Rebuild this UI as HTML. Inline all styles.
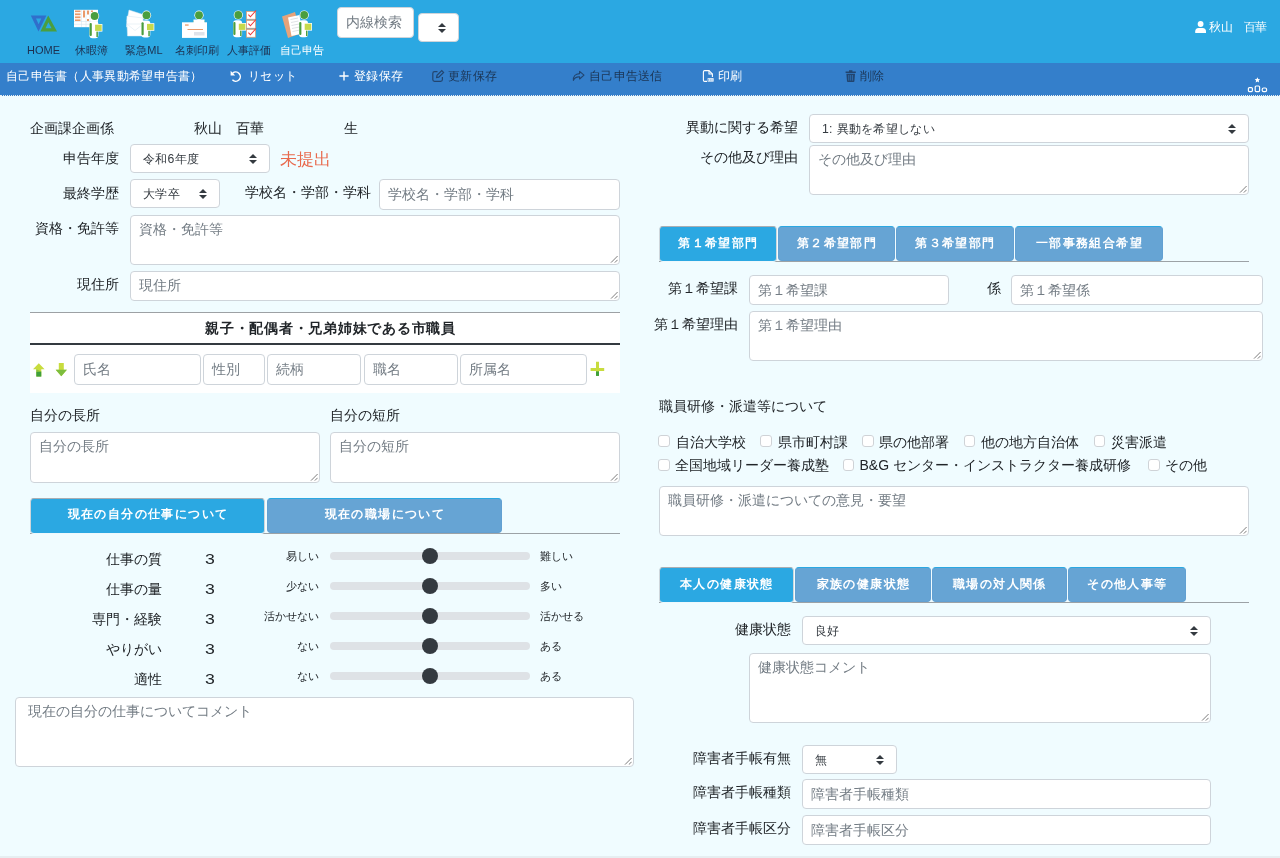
<!DOCTYPE html>
<html lang="ja">
<head>
<meta charset="utf-8">
<title>自己申告書</title>
<style>
*{box-sizing:border-box;margin:0;padding:0}
html,body{width:1280px;height:858px;overflow:hidden}
body{position:relative;background:#f0fcff;font-family:"Liberation Sans",sans-serif;font-size:14px;color:#212529}
.a{position:absolute}
.t{position:absolute;white-space:nowrap;line-height:1;font-size:14px}
.r{text-align:right}
.w{color:#fff}
.dk{color:#1b3555}
#top{left:0;top:0;width:1280px;height:63px;background:#2ba8e2}
#bar{left:0;top:63px;width:1280px;height:33px;background:#347fcb;border-bottom:1px dotted #e9eef0}
.nl{font-size:11px;color:#1d3050;text-align:center;width:60px}
.nl.w{color:#fff}
.b12{font-size:12.25px;letter-spacing:.3px}
.fc{position:absolute;background:#fff;border:1px solid #ced4da;border-radius:4px;color:#737c84;font-size:14px;line-height:1;white-space:nowrap;overflow:hidden}
.fc span{position:absolute;left:8px;top:7px}
.ta span{top:6px}
.sel{position:absolute;background:#fff;border:1px solid #ced4da;border-radius:4px;color:#343a40;font-size:12.25px;letter-spacing:.3px;line-height:1;white-space:nowrap;overflow:hidden}
.sel span{position:absolute;left:12px;top:8px}
.sel svg{position:absolute;right:12px;top:50%;margin-top:-5px}
.ta svg{position:absolute;right:1px;bottom:1px}
.tab{position:absolute;height:35px;border:1px solid #62a0d2;border-top-color:#2ba8e2;border-radius:4px;background:#66a4d4;color:#fff;font-weight:bold;font-size:12px;letter-spacing:1.4px;text-align:center;line-height:31px;white-space:nowrap;padding-left:1px}
.tab.on{height:36px;background:#2ba8e2;border-color:#a9aeb3 #cfd6db #eef8fc #cfd6db}
.rt{line-height:33px}
.ln{position:absolute;height:1px;background:#9ca2a6}
.cb{position:absolute;width:11.5px;height:11.5px;border:1px solid #cfd3d7;border-radius:3px;background:#fff}
.trk{position:absolute;left:329.5px;width:200px;height:8px;border-radius:4px;background:#dee2e6}
.thm{position:absolute;left:421.75px;width:16px;height:16px;border-radius:8px;background:#343a40}
.s10{font-size:10.5px}
.n3{left:205px;font-size:14.5px;transform:scaleX(1.22);transform-origin:0 0}
</style>
</head>
<body>
<div id="wrap" style="position:absolute;left:0;top:0;width:1280px;height:858px;will-change:transform">
<div id="top" class="a"></div>
<div id="bar" class="a"></div>

<!-- NAV -->
<div id="nav">
<svg class="a" style="left:0;top:0" width="1280" height="96" viewBox="0 0 1280 96">
<defs>
<g id="person">
<rect x="-5.2" y="5.2" width="9" height="17" rx="3" fill="#fff"/>
<rect x="-5" y="7" width="2.2" height="13" rx="1" fill="#4a9e3f"/>
<rect x="1.8" y="15" width="1.5" height="6" fill="#4a9e3f"/>
<circle cx="0" cy="0" r="4.6" fill="#fff"/>
<circle cx="0" cy="0" r="3.9" fill="#4a9e3f"/>
<rect x="-0.2" y="8" width="8" height="7.6" fill="#fff"/>
<rect x="0.5" y="8.7" width="6.6" height="6.2" fill="#c6d94b"/>
</g>
</defs>
<!-- HOME logo -->
<path d="M30.8 15.4H46.4L38.5 31.4Z M36 18.6H41.3L38.6 24.2Z" fill="#306fcb" fill-rule="evenodd"/>
<path d="M48.2 15.6L57 31.5H40.4Z M48.4 22.2L45.5 28.2H51.6Z" fill="#4a9e3f" fill-rule="evenodd"/>
<!-- kyuka -->
<rect x="74" y="9.8" width="24" height="17.4" fill="#fff"/>
<g fill="#ea9a6a"><rect x="75" y="10.5" width="5.5" height="1.6"/><rect x="75" y="13.4" width="5.5" height="1.8"/><rect x="75" y="16.4" width="5.5" height="1.8"/><rect x="75" y="19.4" width="5.5" height="1.6"/><rect x="83" y="10.5" width="2" height="7"/><rect x="87" y="10.5" width="2" height="4"/><rect x="87" y="19" width="2" height="2"/><rect x="91" y="10.5" width="2" height="1.5"/></g>
<g stroke="#cfe0ea" stroke-width="0.5"><path d="M74 21.5H98M74 24.3H98M81.5 10V27M86 10V27M90 10V27"/></g>
<use href="#person" x="94.6" y="16"/>
<!-- ML -->
<g fill="#fff" stroke="#d4e4ee" stroke-width="0.5"><path d="M129 10L143 14.5V24L127 21Z"/><path d="M127 16L143 18V28L126.5 27Z"/><path d="M127 24H143V36H127.5Z"/><path d="M127.5 24.5L135 30.5L142.5 24.5" fill="none"/></g>
<use href="#person" x="146.5" y="15.2"/>
<!-- meishi -->
<circle cx="199" cy="15.2" r="4.6" fill="#fff"/><circle cx="199" cy="15.2" r="3.9" fill="#4a9e3f"/>
<circle cx="194.5" cy="21.6" r="1.2" fill="#4a9e3f"/><circle cx="203.5" cy="21.6" r="1.2" fill="#4a9e3f"/>
<rect x="193.5" y="19.5" width="11" height="4" fill="#fff"/>
<rect x="182" y="22.3" width="25" height="15.6" fill="#fff"/>
<rect x="185" y="24.4" width="3.6" height="1.3" fill="#ea9a6a"/><rect x="187.5" y="29" width="15.5" height="1" fill="#ea9a6a"/><rect x="194" y="32" width="10.5" height="3.5" fill="#dfe3ea"/>
<!-- hyoka -->
<use href="#person" x="238.3" y="15"/>
<g fill="#fff" stroke="#ea9a6a" stroke-width="0.7"><rect x="246.5" y="11.4" width="9" height="7.8"/><rect x="246.5" y="20.4" width="9" height="7.8"/><rect x="246.5" y="29.4" width="9" height="7.8"/></g>
<g fill="none" stroke="#f0383a" stroke-width="1.1"><path d="M248.4 14.6L250.4 16.8L256 10.5"/><path d="M248.4 23.6L250.4 25.8L256 19.5"/><path d="M248.4 32.6L250.4 34.8L256 28.5"/></g>
<!-- jiko -->
<path d="M282 16.5L295 12L301 33.5L288 38Z" fill="#e6a37a"/>
<path d="M288 17.5L299.5 15L302.5 33.5L291.5 36Z" fill="#fff"/>
<g stroke="#d5dade" stroke-width="0.8"><path d="M290.5 19.5L298 18M291 22.5L298.5 21M291.5 25.5L299 24M292 28.5L299.5 27M292.5 31.5L300 30"/></g>
<use href="#person" x="304.2" y="15"/>
<!-- user -->
<circle cx="1200.6" cy="24" r="2.9" fill="#fff"/><path d="M1195.2 33V31.6Q1195.2 28 1198.6 28H1202.6Q1206 28 1206 31.6V33Z" fill="#fff"/>
<!-- undo -->
<g fill="none" stroke="#fff" stroke-width="1.5"><path d="M232.6 73.2A4.6 4.6 0 1 1 232.4 79.8"/></g><path d="M230.6 70.8V75.4H235.2Z" fill="#fff"/>
<!-- plus -->
<path d="M344 71.4V80.6M339.4 76H348.6" stroke="#fff" stroke-width="1.4" fill="none"/>
<!-- edit -->
<g fill="none" stroke="#22456f" stroke-width="1.2"><path d="M437.5 71.6H434.6Q432.8 71.6 432.8 73.4V79.6Q432.8 81.4 434.6 81.4H440.6Q442.4 81.4 442.4 79.6V77"/><path d="M436.6 77.6L437 75.4L441.8 70.6L443.6 72.4L438.8 77.2Z"/></g>
<!-- share -->
<path d="M579.6 71.4L584 75.2L579.6 79V76.9Q575 76.6 573.4 80.4Q573 74 579.6 73.6Z" fill="none" stroke="#22456f" stroke-width="1.1" stroke-linejoin="round"/>
<!-- pdf -->
<g fill="none" stroke="#fff" stroke-width="1.1"><path d="M707 81.4H704.6Q703.4 81.4 703.4 80.2V71.8Q703.4 70.6 704.6 70.6H709L712.4 74V77"/><path d="M709 70.6V74H712.4"/></g>
<rect x="707.6" y="78.2" width="6" height="3.4" fill="#fff"/><path d="M708.4 80.9V78.9M710.2 80.9V78.9M712 80.9V78.9" stroke="#347fcb" stroke-width="0.6"/>
<!-- trash -->
<path d="M845.6 71.6H855.8V72.9H845.6Z M849 70.2H852.4V71.6H849Z M846.4 73.8H855L854.4 81.2Q854.3 82 853.5 82H847.9Q847.1 82 847 81.2Z" fill="#22456f"/>
<path d="M848.8 75V80.6M850.7 75V80.6M852.6 75V80.6" stroke="#347fcb" stroke-width="0.7"/>
<!-- ranking -->
<path d="M1257.4 77.2L1258.2 79L1260.1 79.2L1258.7 80.5L1259.1 82.4L1257.4 81.4L1255.7 82.4L1256.1 80.5L1254.7 79.2L1256.6 79Z" fill="#fff"/>
<g fill="none" stroke="#fff" stroke-width="1.2"><rect x="1248.4" y="87.6" width="4" height="4" rx="1"/><rect x="1255.2" y="86" width="4.4" height="5.6" rx="1"/><rect x="1262.2" y="88" width="4.4" height="3.6" rx="1.4"/></g>
</svg>
<div class="t nl" style="left:13.5px;top:45px">HOME</div>
<div class="t nl" style="left:61.5px;top:45px">休暇簿</div>
<div class="t nl" style="left:114px;top:45px">緊急ML</div>
<div class="t nl" style="left:166.5px;top:45px">名刺印刷</div>
<div class="t nl" style="left:219px;top:45px">人事評価</div>
<div class="t nl w" style="left:271.5px;top:45px">自己申告</div>
<div class="fc" style="left:337px;top:7px;width:77px;height:31px"><span style="left:7.5px;top:7px">内線検索</span></div>
<div class="sel" style="left:418px;top:13px;width:41px;height:29px"><svg width="8" height="10" viewBox="0 0 4 5"><path fill="#343a40" d="M2 0L0 2h4zm0 5L0 3h4z"/></svg></div>
<div class="t w" style="left:1209px;top:21px;font-size:12px;letter-spacing:-.5px">秋山　百華</div>
<div class="t w b12" style="left:6px;top:70px">自己申告書（人事異動希望申告書）</div>
<div class="t w b12" style="left:248px;top:70px">リセット</div>
<div class="t w b12" style="left:354px;top:70px">登録保存</div>
<div class="t dk b12" style="left:448px;top:70px">更新保存</div>
<div class="t dk b12" style="left:589px;top:70px">自己申告送信</div>
<div class="t w b12" style="left:718px;top:70px">印刷</div>
<div class="t dk b12" style="left:860px;top:70px">削除</div>
</div>

<!-- FORM LEFT -->
<div id="left">
<div class="t" style="left:30px;top:120.5px">企画課企画係</div>
<div class="t" style="left:193.5px;top:120.5px">秋山　百華</div>
<div class="t" style="left:343.5px;top:120.5px">生</div>

<div class="t r" style="left:19px;width:100px;top:150.5px">申告年度</div>
<div class="sel" style="left:130px;top:144px;width:140px;height:29px"><span>令和6年度</span><svg width="8" height="10" viewBox="0 0 4 5"><path fill="#343a40" d="M2 0L0 2h4zm0 5L0 3h4z"/></svg></div>
<div class="t" style="left:279.5px;top:150.5px;font-size:17px;color:#e86a4e">未提出</div>

<div class="t r" style="left:19px;width:100px;top:185.5px">最終学歴</div>
<div class="sel" style="left:130px;top:179px;width:90px;height:29px"><span>大学卒</span><svg width="8" height="10" viewBox="0 0 4 5"><path fill="#343a40" d="M2 0L0 2h4zm0 5L0 3h4z"/></svg></div>
<div class="t" style="left:245px;top:185px">学校名・学部・学科</div>
<div class="fc" style="left:379px;top:179px;width:241px;height:31px"><span>学校名・学部・学科</span></div>

<div class="t r" style="left:19px;width:100px;top:221px">資格・免許等</div>
<div class="fc ta" style="left:130px;top:215px;width:490px;height:50px"><span>資格・免許等</span><svg width="8" height="8"><path d="M7.6 1L1 7.6M7.6 4.8L4.8 7.6" stroke="#7d7d7d" stroke-width="1"/></svg></div>

<div class="t r" style="left:19px;width:100px;top:277px">現住所</div>
<div class="fc ta" style="left:130px;top:271px;width:490px;height:30px"><span>現住所</span><svg width="8" height="8"><path d="M7.6 1L1 7.6M7.6 4.8L4.8 7.6" stroke="#7d7d7d" stroke-width="1"/></svg></div>

<!-- table -->
<div class="a" style="left:30px;top:312px;width:590px;height:81px;background:#fff;border-top:1px solid #9da1a4"></div>
<div class="a" style="left:30px;top:343px;width:590px;height:2px;background:#343a40"></div>
<div class="t" style="left:205px;top:320.5px;font-weight:bold;letter-spacing:0.75px">親子・配偶者・兄弟姉妹である市職員</div>
<svg class="a" style="left:30px;top:355px" width="590" height="30" viewBox="30 355 590 30">
<path d="M38.8 363.2L44.6 369.2H41.3V376.6H36.3V369.2H33Z" fill="#c8dc3e"/><rect x="36.3" y="371.5" width="5" height="5.1" fill="#3f9f3c"/><path d="M36.3 371.5H41.3L36.3 369.2Z" fill="#8cc43f"/>
<path d="M58.8 363H63.8V369.8H66.9L61.3 376.2L55.7 369.8H58.8Z" fill="#c8dc3e"/><path d="M55.7 369.8H66.9L61.3 376.2Z" fill="#7dbd3e"/>
<path d="M596 361.8H599V368H604.2V371H599V375.9H596V371H590.6V368H596Z" fill="#c8dc3e"/><rect x="596" y="371.4" width="3" height="4.5" fill="#3f9f3c"/>
</svg>
<div class="fc" style="left:74px;top:354px;width:127px;height:31px"><span>氏名</span></div>
<div class="fc" style="left:203px;top:354px;width:62px;height:31px"><span>性別</span></div>
<div class="fc" style="left:267px;top:354px;width:94px;height:31px"><span>続柄</span></div>
<div class="fc" style="left:364px;top:354px;width:94px;height:31px"><span>職名</span></div>
<div class="fc" style="left:460px;top:354px;width:127px;height:31px"><span>所属名</span></div>

<div class="t" style="left:30px;top:408px">自分の長所</div>
<div class="fc ta" style="left:30px;top:432px;width:290px;height:51px"><span>自分の長所</span><svg width="8" height="8"><path d="M7.6 1L1 7.6M7.6 4.8L4.8 7.6" stroke="#7d7d7d" stroke-width="1"/></svg></div>
<div class="t" style="left:330px;top:408px">自分の短所</div>
<div class="fc ta" style="left:330px;top:432px;width:290px;height:51px"><span>自分の短所</span><svg width="8" height="8"><path d="M7.6 1L1 7.6M7.6 4.8L4.8 7.6" stroke="#7d7d7d" stroke-width="1"/></svg></div>

<div class="ln" style="left:30px;top:533px;width:590px"></div>
<div class="tab on" style="left:30px;top:498px;width:235px">現在の自分の仕事について</div>
<div class="tab" style="left:267px;top:498px;width:235px">現在の職場について</div>

<div class="t r" style="left:62px;width:100px;top:552px">仕事の質</div>
<div class="t r" style="left:62px;width:100px;top:582px">仕事の量</div>
<div class="t r" style="left:62px;width:100px;top:612px">専門・経験</div>
<div class="t r" style="left:62px;width:100px;top:642px">やりがい</div>
<div class="t r" style="left:62px;width:100px;top:672px">適性</div>
<div class="t n3" style="top:552px">3</div>
<div class="t n3" style="top:582px">3</div>
<div class="t n3" style="top:612px">3</div>
<div class="t n3" style="top:642px">3</div>
<div class="t n3" style="top:672px">3</div>
<div class="t r s10" style="left:219px;width:100px;top:550.5px">易しい</div>
<div class="t r s10" style="left:219px;width:100px;top:580.5px">少ない</div>
<div class="t r s10" style="left:219px;width:100px;top:610.5px">活かせない</div>
<div class="t r s10" style="left:219px;width:100px;top:640.5px">ない</div>
<div class="t r s10" style="left:219px;width:100px;top:670.5px">ない</div>
<div class="t s10" style="left:539.5px;top:550.5px">難しい</div>
<div class="t s10" style="left:539.5px;top:580.5px">多い</div>
<div class="t s10" style="left:539.5px;top:610.5px">活かせる</div>
<div class="t s10" style="left:539.5px;top:640.5px">ある</div>
<div class="t s10" style="left:539.5px;top:670.5px">ある</div>
<div class="trk" style="top:552px"></div><div class="thm" style="top:548.0px"></div>
<div class="trk" style="top:582px"></div><div class="thm" style="top:578.0px"></div>
<div class="trk" style="top:612px"></div><div class="thm" style="top:608.0px"></div>
<div class="trk" style="top:642px"></div><div class="thm" style="top:638.0px"></div>
<div class="trk" style="top:672px"></div><div class="thm" style="top:668.0px"></div>
<div class="fc ta" style="left:15px;top:697px;width:619px;height:70px"><span style="left:12px">現在の自分の仕事についてコメント</span><svg width="8" height="8"><path d="M7.6 1L1 7.6M7.6 4.8L4.8 7.6" stroke="#7d7d7d" stroke-width="1"/></svg></div>
</div>

<!-- FORM RIGHT -->
<div id="right">
<div class="t r" style="left:648px;width:150px;top:119.5px">異動に関する希望</div>
<div class="sel" style="left:809px;top:114px;width:440px;height:29px"><span>1: 異動を希望しない</span><svg width="8" height="10" viewBox="0 0 4 5"><path fill="#343a40" d="M2 0L0 2h4zm0 5L0 3h4z"/></svg></div>
<div class="t r" style="left:648px;width:150px;top:149.5px">その他及び理由</div>
<div class="fc ta" style="left:809px;top:145px;width:440px;height:50px"><span>その他及び理由</span><svg width="8" height="8"><path d="M7.6 1L1 7.6M7.6 4.8L4.8 7.6" stroke="#7d7d7d" stroke-width="1"/></svg></div>

<div class="ln" style="left:659px;top:261px;width:590px"></div>
<div class="tab on rt" style="left:659px;top:226px;width:118px">第１希望部門</div>
<div class="tab rt" style="left:778px;top:226px;width:117px">第２希望部門</div>
<div class="tab rt" style="left:896px;top:226px;width:118px">第３希望部門</div>
<div class="tab rt" style="left:1015px;top:226px;width:148px">一部事務組合希望</div>

<div class="t r" style="left:638px;width:100px;top:280.5px">第１希望課</div>
<div class="fc" style="left:749px;top:275px;width:200px;height:30px"><span>第１希望課</span></div>
<div class="t" style="left:987px;top:280.5px">係</div>
<div class="fc" style="left:1011px;top:275px;width:252px;height:30px"><span>第１希望係</span></div>
<div class="t r" style="left:638px;width:100px;top:316.5px">第１希望理由</div>
<div class="fc ta" style="left:749px;top:311px;width:514px;height:50px"><span>第１希望理由</span><svg width="8" height="8"><path d="M7.6 1L1 7.6M7.6 4.8L4.8 7.6" stroke="#7d7d7d" stroke-width="1"/></svg></div>

<div class="t" style="left:658.5px;top:398.5px">職員研修・派遣等について</div>
<div class="cb" style="left:658px;top:435px"></div><div class="t" style="left:675.5px;top:434.5px">自治大学校</div>
<div class="cb" style="left:760px;top:435px"></div><div class="t" style="left:777.5px;top:434.5px">県市町村課</div>
<div class="cb" style="left:862px;top:435px"></div><div class="t" style="left:879px;top:434.5px">県の他部署</div>
<div class="cb" style="left:963.5px;top:435px"></div><div class="t" style="left:981px;top:434.5px">他の地方自治体</div>
<div class="cb" style="left:1093.5px;top:435px"></div><div class="t" style="left:1110.5px;top:434.5px">災害派遣</div>
<div class="cb" style="left:658px;top:459px"></div><div class="t" style="left:675px;top:458px">全国地域リーダー養成塾</div>
<div class="cb" style="left:842.5px;top:459px"></div><div class="t" style="left:859.5px;top:458px">B&amp;G センター・インストラクター養成研修</div>
<div class="cb" style="left:1148px;top:459px"></div><div class="t" style="left:1165px;top:458px">その他</div>
<div class="fc ta" style="left:659px;top:486px;width:590px;height:50px"><span>職員研修・派遣についての意見・要望</span><svg width="8" height="8"><path d="M7.6 1L1 7.6M7.6 4.8L4.8 7.6" stroke="#7d7d7d" stroke-width="1"/></svg></div>

<div class="ln" style="left:659px;top:602px;width:590px"></div>
<div class="tab on rt" style="left:659px;top:567px;width:135px">本人の健康状態</div>
<div class="tab rt" style="left:795px;top:567px;width:136px">家族の健康状態</div>
<div class="tab rt" style="left:932px;top:567px;width:135px">職場の対人関係</div>
<div class="tab rt" style="left:1068px;top:567px;width:118px">その他人事等</div>

<div class="t r" style="left:690.5px;width:100px;top:621.5px">健康状態</div>
<div class="sel" style="left:801.5px;top:616px;width:409.5px;height:29px"><span>良好</span><svg width="8" height="10" viewBox="0 0 4 5"><path fill="#343a40" d="M2 0L0 2h4zm0 5L0 3h4z"/></svg></div>
<div class="fc ta" style="left:749px;top:653px;width:462px;height:70px"><span>健康状態コメント</span><svg width="8" height="8"><path d="M7.6 1L1 7.6M7.6 4.8L4.8 7.6" stroke="#7d7d7d" stroke-width="1"/></svg></div>

<div class="t r" style="left:690.5px;width:100px;top:750.5px">障害者手帳有無</div>
<div class="sel" style="left:801.5px;top:745px;width:95px;height:29px"><span>無</span><svg width="8" height="10" viewBox="0 0 4 5"><path fill="#343a40" d="M2 0L0 2h4zm0 5L0 3h4z"/></svg></div>
<div class="t r" style="left:690.5px;width:100px;top:784.5px">障害者手帳種類</div>
<div class="fc" style="left:801.5px;top:779px;width:409.5px;height:30px"><span>障害者手帳種類</span></div>
<div class="t r" style="left:690.5px;width:100px;top:820.5px">障害者手帳区分</div>
<div class="fc" style="left:801.5px;top:815px;width:409.5px;height:30px"><span>障害者手帳区分</span></div>
</div>

<div class="a" style="left:0;top:856px;width:1280px;height:2px;background:#e6eef1"></div>
</div>
</body>
</html>
